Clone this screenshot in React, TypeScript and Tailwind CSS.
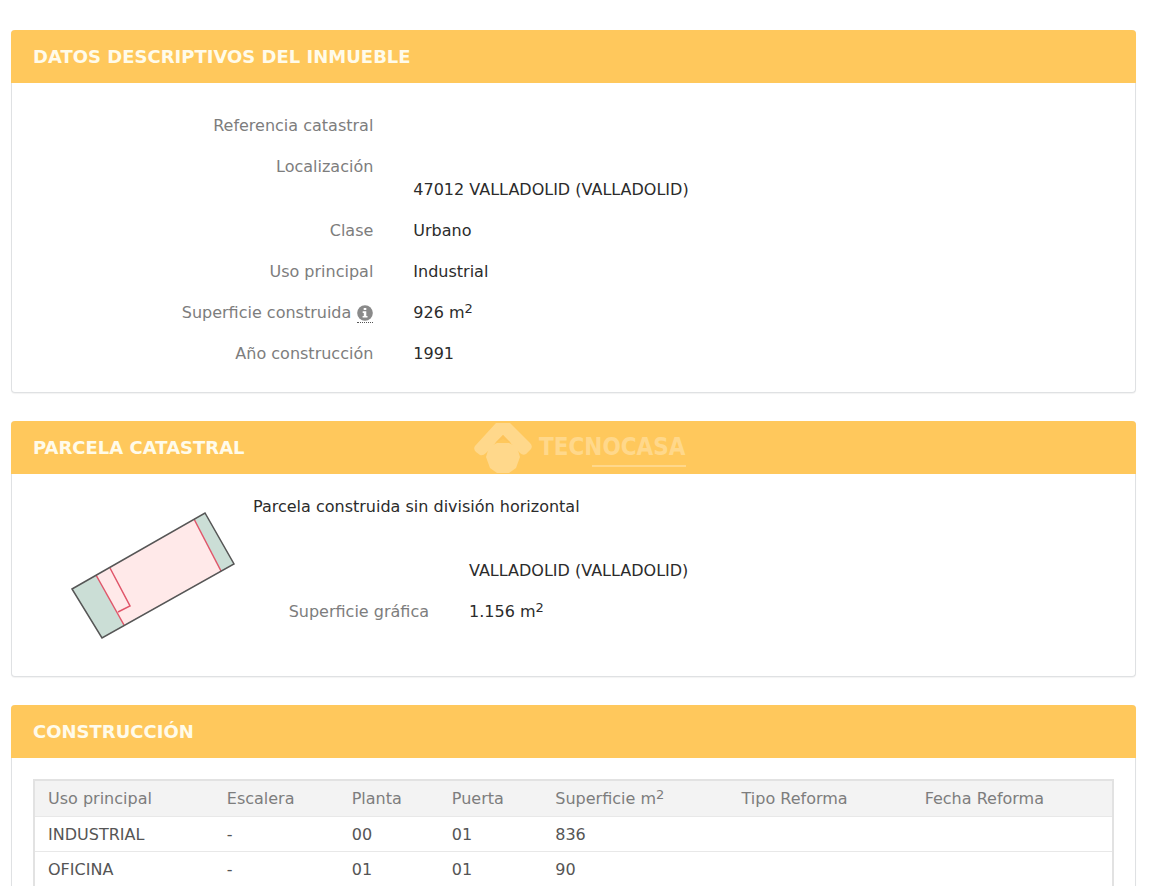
import type { ReactNode } from 'react';

interface Construction {
    use: string;
    stair: string;
    floor: string;
    door: string;
    area: string;
}

const constructions: Construction[] = [
    { use: 'INDUSTRIAL', stair: '-', floor: '00', door: '01', area: '836' },
    { use: 'OFICINA', stair: '-', floor: '01', door: '01', area: '90' },
];

function Card({ title, overlay, children }: { title: string; overlay?: ReactNode; children: ReactNode }) {
    return (
        <section className="rounded-[4px] border border-t-0 border-[#dfe1e3] bg-white shadow-[0_1px_1px_rgba(0,0,0,0.05)]">
            <div className="relative -mx-px rounded-t-[4px] bg-[#ffc85c] px-[22px] py-[15px]">
                <h2 className="text-[18px] leading-[23px] font-bold text-[#fffbea]">{title}</h2>
                {overlay}
            </div>
            {children}
        </section>
    );
}

function Field({ label, labelWidth, children }: { label: ReactNode; labelWidth: string; children?: ReactNode }) {
    return (
        <div className="flex">
            <dt className={`${labelWidth} shrink-0 pr-5 text-right text-[#7d7d7d]`}>{label}</dt>
            <dd className="flex-1 pl-5 text-[#2b2b2b]">{children}</dd>
        </div>
    );
}

function SquareMeters() {
    return (
        <>
            m<sup className="relative -top-[5px] align-baseline text-[13px] leading-none">2</sup>
        </>
    );
}

function InfoIcon() {
    return (
        <button type="button" aria-label="Información" className="ml-[6px] inline-block border-b border-dotted border-[#555] pb-px align-[-3px]">
            <svg viewBox="0 0 16 16" className="block size-4">
                <circle cx="8" cy="8" r="7.8" fill="#8a8a8a" />
                <path d="M6.7 3h2.6v2.1H6.7zM5.7 6.3h3.6v4.6h1.2v1.6H5.6v-1.6h1.2V7.9H5.7z" fill="#fff" />
            </svg>
        </button>
    );
}

function Watermark() {
    return (
        <div className="pointer-events-none absolute inset-y-0 left-[462px] flex items-center gap-[6px] text-[#ffd88b]">
            <svg viewBox="0 0 60 52" className="h-[52px] w-[60px]" fill="currentColor">
                <path d="M23 1 H37 L57 21 Q60 24 58 27 L53 32 Q50 34 47 31 L30 13 L13 31 Q10 34 7 33 L3 30 Q0 27 2 24 Z" />
                <path d="M24 21 H36 L44 25 L47 35 L43 46 L36 51 H24 L17 46 L13 35 L16 25 Z" />
                <path d="M22 21 L30 13 L38 21 L30 17 Z" fill="#fdc35a" />
            </svg>
            <div className="flex flex-col items-end">
                <span className="font-['Liberation_Sans_Narrow','DejaVu_Sans_Condensed',sans-serif] text-[24px] leading-9 font-bold">TECNOCASA</span>
                <span className="h-[2px] w-[94px] bg-[#ffd88b]" />
            </div>
        </div>
    );
}

function ParcelPlan() {
    return (
        <svg viewBox="0 0 166 130" className="h-[130px] w-[166px]" role="img" aria-label="Parcela">
            <path d="M2 78 L135 2 L164 53 L32 127 Z" fill="#cbded6" />
            <path d="M26 64 L124 8 L151 60 L54 114 Z" fill="#ffe9e9" />
            <g fill="none" stroke="#e0566a" strokeWidth="1.5">
                <path d="M26 64 L54 114" />
                <path d="M124 8 L151 60" />
                <path d="M40 57 L60 95 L48 101" />
            </g>
            <path d="M2 78 L135 2 L164 53 L32 127 Z" fill="none" stroke="#565656" strokeWidth="1.5" />
        </svg>
    );
}

export default function App() {
    return (
        <main className="flex h-screen flex-col gap-7 overflow-hidden bg-white pt-[30px] pr-[18px] pl-[11px] font-['DejaVu_Sans',sans-serif] text-[16px] leading-[23px] *:shrink-0">
            <Card title="DATOS DESCRIPTIVOS DEL INMUEBLE">
                <dl className="flex flex-col gap-[18px] px-[21px] pt-[31px] pb-[27px]">
                    <Field label="Referencia catastral" labelWidth="w-1/3" />
                    <Field label="Localización" labelWidth="w-1/3">
                        <br />
                        47012 VALLADOLID (VALLADOLID)
                    </Field>
                    <Field label="Clase" labelWidth="w-1/3">Urbano</Field>
                    <Field label="Uso principal" labelWidth="w-1/3">Industrial</Field>
                    <Field label={<>Superficie construida<InfoIcon /></>} labelWidth="w-1/3">
                        926 <SquareMeters />
                    </Field>
                    <Field label="Año construcción" labelWidth="w-1/3">1991</Field>
                </dl>
            </Card>

            <Card title="PARCELA CATASTRAL" overlay={<Watermark />}>
                <div className="flex px-[21px] pt-[21px] pb-[35px]">
                    <div className="w-[200px] shrink-0 pt-4 pl-[37px]">
                        <ParcelPlan />
                    </div>
                    <div className="flex-1">
                        <p className="pl-5 text-[#2b2b2b]">Parcela construida sin división horizontal</p>
                        <dl className="mt-[18px] flex flex-col gap-[18px]">
                            <Field label="" labelWidth="w-[216px]">
                                <br />
                                VALLADOLID (VALLADOLID)
                            </Field>
                            <Field label="Superficie gráfica" labelWidth="w-[216px]">
                                1.156 <SquareMeters />
                            </Field>
                        </dl>
                    </div>
                </div>
            </Card>

            <Card title="CONSTRUCCIÓN">
                <div className="px-[21px] pt-[21px] pb-7">
                    <table className="w-full table-fixed border-separate border-spacing-0 border-2 border-[#e2e2e2] text-left">
                        <colgroup>
                            <col className="w-[16.6%]" />
                            <col className="w-[11.6%]" />
                            <col className="w-[9.3%]" />
                            <col className="w-[9.6%]" />
                            <col className="w-[17.3%]" />
                            <col className="w-[17%]" />
                            <col />
                        </colgroup>
                        <thead className="bg-[#f3f3f3] text-[#7d7d7d]">
                            <tr className="*:border-b *:border-[#e8e8e8] *:px-[13px] *:py-[6px] *:font-normal">
                                <th>Uso principal</th>
                                <th>Escalera</th>
                                <th>Planta</th>
                                <th>Puerta</th>
                                <th>Superficie <SquareMeters /></th>
                                <th>Tipo Reforma</th>
                                <th>Fecha Reforma</th>
                            </tr>
                        </thead>
                        <tbody className="text-[#555]">
                            {constructions.map((item) => (
                                <tr key={item.use} className="*:border-b *:border-[#e8e8e8] *:px-[13px] *:pt-[6px] *:pb-[5px]">
                                    <td>{item.use}</td>
                                    <td>{item.stair}</td>
                                    <td>{item.floor}</td>
                                    <td>{item.door}</td>
                                    <td>{item.area}</td>
                                    <td></td>
                                    <td></td>
                                </tr>
                            ))}
                        </tbody>
                    </table>
                </div>
            </Card>
        </main>
    );
}
